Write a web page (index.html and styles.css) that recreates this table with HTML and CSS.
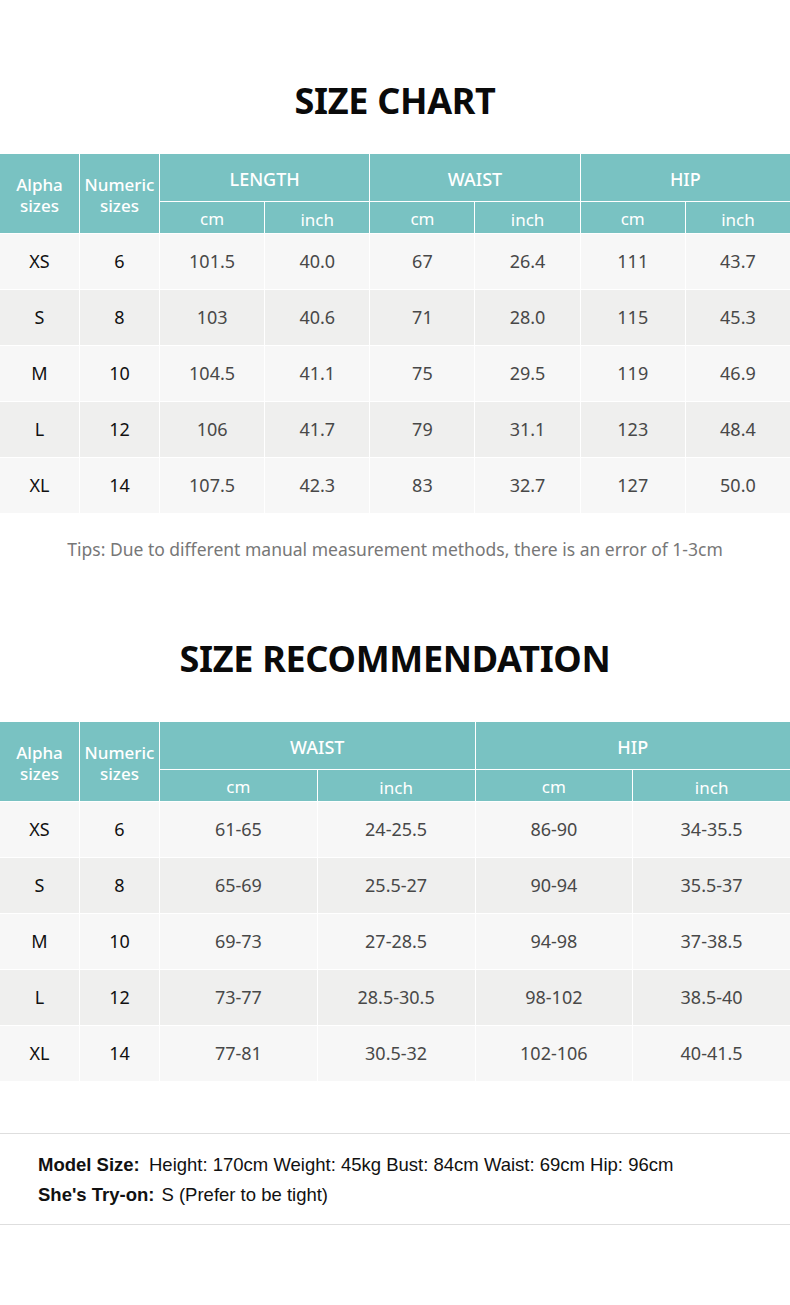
FILE: index.html
```html
<!DOCTYPE html>
<html lang="en">
<head>
<meta charset="utf-8">
<title>Size Chart</title>
<link rel="stylesheet" href="styles.css">
</head>
<body>
<main class="page">
  <h1 class="title title-chart">SIZE CHART</h1>
  <div class="grid grid-chart">
    <div class="hd span2">Alpha<br>sizes</div>
    <div class="hd span2">Numeric<br>sizes</div>
    <div class="hd grp">LENGTH</div>
    <div class="hd grp">WAIST</div>
    <div class="hd grp">HIP</div>
    <div class="hd sub cm">cm</div><div class="hd sub">inch</div>
    <div class="hd sub cm">cm</div><div class="hd sub">inch</div>
    <div class="hd sub cm">cm</div><div class="hd sub">inch</div>

    <div class="c k odd">XS</div><div class="c k odd">6</div><div class="c odd">101.5</div><div class="c odd">40.0</div><div class="c odd">67</div><div class="c odd">26.4</div><div class="c odd">111</div><div class="c odd">43.7</div>
    <div class="c k even">S</div><div class="c k even">8</div><div class="c even">103</div><div class="c even">40.6</div><div class="c even">71</div><div class="c even">28.0</div><div class="c even">115</div><div class="c even">45.3</div>
    <div class="c k odd">M</div><div class="c k odd">10</div><div class="c odd">104.5</div><div class="c odd">41.1</div><div class="c odd">75</div><div class="c odd">29.5</div><div class="c odd">119</div><div class="c odd">46.9</div>
    <div class="c k even">L</div><div class="c k even">12</div><div class="c even">106</div><div class="c even">41.7</div><div class="c even">79</div><div class="c even">31.1</div><div class="c even">123</div><div class="c even">48.4</div>
    <div class="c k odd">XL</div><div class="c k odd">14</div><div class="c odd">107.5</div><div class="c odd">42.3</div><div class="c odd">83</div><div class="c odd">32.7</div><div class="c odd">127</div><div class="c odd">50.0</div>
  </div>
  <p class="tips">Tips: Due to different manual measurement methods, there is an error of 1-3cm</p>

  <h1 class="title title-rec">SIZE RECOMMENDATION</h1>
  <div class="grid grid-rec">
    <div class="hd span2">Alpha<br>sizes</div>
    <div class="hd span2">Numeric<br>sizes</div>
    <div class="hd grp">WAIST</div>
    <div class="hd grp">HIP</div>
    <div class="hd sub cm">cm</div><div class="hd sub">inch</div>
    <div class="hd sub cm">cm</div><div class="hd sub">inch</div>

    <div class="c k odd">XS</div><div class="c k odd">6</div><div class="c odd">61-65</div><div class="c odd">24-25.5</div><div class="c odd">86-90</div><div class="c odd">34-35.5</div>
    <div class="c k even">S</div><div class="c k even">8</div><div class="c even">65-69</div><div class="c even">25.5-27</div><div class="c even">90-94</div><div class="c even">35.5-37</div>
    <div class="c k odd">M</div><div class="c k odd">10</div><div class="c odd">69-73</div><div class="c odd">27-28.5</div><div class="c odd">94-98</div><div class="c odd">37-38.5</div>
    <div class="c k even">L</div><div class="c k even">12</div><div class="c even">73-77</div><div class="c even">28.5-30.5</div><div class="c even">98-102</div><div class="c even">38.5-40</div>
    <div class="c k odd">XL</div><div class="c k odd">14</div><div class="c odd">77-81</div><div class="c odd">30.5-32</div><div class="c odd">102-106</div><div class="c odd">40-41.5</div>
  </div>

  <section class="model">
    <p class="model-line"><span class="label">Model Size:</span><span class="val">Height: 170cm Weight: 45kg Bust: 84cm Waist: 69cm Hip: 96cm</span></p>
    <p class="model-line"><span class="label label2">She's Try-on:</span><span class="val">S (Prefer to be tight)</span></p>
  </section>
</main>
</body>
</html>
```

FILE: styles.css
```css
html, body {
  margin: 0;
  padding: 0;
  background: #ffffff;
}

.page {
  width: 790px;
  font-family: "Noto Sans", "DejaVu Sans", sans-serif;
  color: #111;
}

.title {
  margin: 0;
  text-align: center;
  font-family: "Noto Sans", sans-serif;
  font-weight: 700;
  font-size: 36px;
  letter-spacing: -0.3px;
  line-height: 44px;
  color: #0a0a0a;
}

.title-chart {
  padding-top: 79px;
  padding-bottom: 31px;
}

.title-rec {
  padding-top: 76px;
  padding-bottom: 41px;
}

.grid {
  display: grid;
  gap: 1px;
  background: #ffffff;
  grid-template-rows: 47px 31px repeat(5, 55px);
}

.grid-chart {
  grid-template-columns: 79px 79px repeat(6, 1fr);
}

.grid-rec {
  grid-template-columns: 79px 79px repeat(4, 1fr);
}

.hd {
  background: #79c2c2;
  color: #ffffff;
  display: flex;
  align-items: center;
  justify-content: center;
  text-align: center;
}

.span2 {
  grid-row: span 2;
  font-size: 17px;
  line-height: 21px;
  font-weight: 500;
  padding-top: 3px;
}

.grp {
  grid-column: span 2;
  font-size: 18px;
  font-weight: 500;
  padding-top: 2px;
}

.sub {
  font-size: 17px;
  padding-top: 3px;
}

.sub.cm {
  padding-top: 1px;
}

.c {
  display: flex;
  align-items: center;
  justify-content: center;
  font-size: 18px;
  color: #484848;
  padding-bottom: 2px;
}

.c.k {
  color: #111111;
}

.odd {
  background: #f7f7f7;
}

.even {
  background: #efefee;
}

.tips {
  margin: 0;
  padding-top: 24px;
  text-align: center;
  font-size: 17.5px;
  line-height: 24px;
  color: #777777;
}

.model {
  margin-top: 52px;
  border-top: 1px solid #dedede;
  border-bottom: 1px solid #dedede;
  padding: 16px 0 14px 38px;
  font-family: "Liberation Sans", sans-serif;
  font-size: 18.5px;
  color: #111;
}

.model-line {
  margin: 0;
  line-height: 30px;
}

.label {
  font-weight: 700;
  display: inline-block;
  width: 111px;
}

.label2 {
  width: auto;
  margin-right: 7px;
}
```
